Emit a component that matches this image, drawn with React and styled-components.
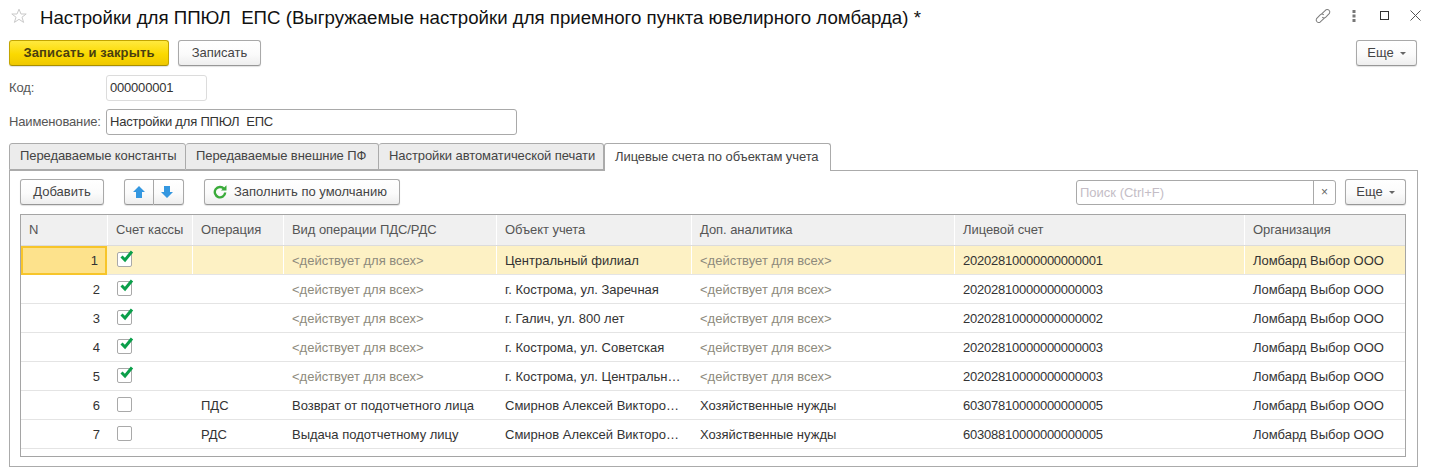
import React from "react";
import styled, { createGlobalStyle } from "styled-components";

const GlobalStyle = createGlobalStyle`
  html, body {
    margin: 0;
    padding: 0;
    background: #fff;
  }
  body {
    font-family: "Liberation Sans", Arial, sans-serif;
    font-size: 13px;
    color: #333;
  }
`;

const Page = styled.div`
  width: 1431px;
  height: 474px;
  overflow: hidden;
  padding: 0 14px 0 9px;
  box-sizing: border-box;
  display: flex;
  flex-direction: column;
`;

const TitleBar = styled.div`
  height: 39px;
  flex: none;
  display: flex;
  align-items: center;
  margin-bottom: 1px;
`;

const StarBox = styled.div`
  width: 31px;
  height: 18px;
  flex: none;
  padding-left: 2px;
  box-sizing: border-box;
  margin-top: -6px;
`;

const Title = styled.h1`
  flex: 1;
  margin: -3px 0 0;
  font-size: 18.67px;
  font-weight: 400;
  color: #111;
  white-space: pre;
`;

const WindowIcons = styled.div`
  display: flex;
  align-items: center;
  margin-top: -8px;
  margin-right: -14px;
  color: #555;
`;

const WindowIcon = styled.div`
  width: 31px;
  height: 18px;
  display: flex;
  align-items: center;
  justify-content: center;
`;

const CommandBar = styled.div`
  height: 26px;
  flex: none;
  display: flex;
  align-items: center;
  gap: 9px;
`;

const Spacer = styled.div`
  flex: 1;
`;

const Button = styled.button`
  height: 26px;
  width: ${(p) => p.$w}px;
  box-sizing: border-box;
  padding: 0 0 1px;
  margin: 0;
  border: 1px solid #a9a9a9;
  border-bottom-color: #979797;
  border-radius: 3px;
  background: linear-gradient(#ffffff, #fbfbfb 55%, #eeeeee);
  box-shadow: 0 1px 1px rgba(0, 0, 0, 0.12);
  font: 13px "Liberation Sans", Arial, sans-serif;
  color: #444;
  display: inline-flex;
  align-items: center;
  justify-content: center;
  gap: 6px;
  flex: none;
`;

const PrimaryButton = styled(Button)`
  border-color: #c3a500;
  border-bottom-color: #a88f00;
  background: linear-gradient(#ffe93f, #fbd900 55%, #efc800);
  font-weight: 700;
  letter-spacing: 0.12px;
  color: #4a3f10;
`;

const FillButton = styled(Button)`
  justify-content: flex-start;
  padding-left: 8px;
  gap: 7px;
`;

const Caret = styled.span`
  width: 0;
  height: 0;
  border-left: 3px solid transparent;
  border-right: 3px solid transparent;
  border-top: 3px solid #666;
  margin-top: 2px;
`;

const Field = styled.div`
  flex: none;
  display: flex;
  align-items: center;
  height: 26px;
  margin-top: ${(p) => p.$top}px;
`;

const Label = styled.label`
  width: 97px;
  flex: none;
  color: #555;
  letter-spacing: -0.15px;
  padding-bottom: 2px;
`;

const Input = styled.div`
  width: ${(p) => p.$w}px;
  height: 26px;
  box-sizing: border-box;
  border: 1px solid ${(p) => p.$border};
  border-radius: 3px;
  padding: 0 3px 2px;
  display: flex;
  align-items: center;
  color: #333;
  letter-spacing: -0.2px;
  white-space: pre;
`;

const Tabs = styled.div`
  flex: none;
  display: flex;
  height: 28px;
  margin-top: 8px;
`;

const Tab = styled.div`
  box-sizing: border-box;
  width: ${(p) => p.$w}px;
  height: ${(p) => (p.$active ? 28 : 27)}px;
  border: 1px solid #ababab;
  border-left-width: ${(p) => (p.$first || p.$active ? 1 : 0)}px;
  border-bottom-width: ${(p) => (p.$active ? 0 : 1)}px;
  border-radius: 3px 3px 0 0;
  background: ${(p) => (p.$active ? "#fff" : "#ececec")};
  color: #444;
  letter-spacing: -0.08px;
  display: flex;
  align-items: center;
  padding: 0 0 2px 10px;
  white-space: nowrap;
  position: relative;
  z-index: ${(p) => (p.$active ? 1 : 0)};
`;

const Panel = styled.div`
  flex: none;
  margin-top: -1px;
  width: 1409px;
  height: 297px;
  box-sizing: border-box;
  border: 1px solid #ababab;
  padding: 8px 11px 0 10px;
`;

const Toolbar = styled.div`
  height: 26px;
  display: flex;
  align-items: center;
`;

const ArrowGroup = styled.div`
  display: flex;
  margin-left: 20px;
  margin-right: 20px;
`;

const ArrowButton = styled(Button)`
  border-radius: ${(p) => (p.$left ? "3px 0 0 3px" : "0 3px 3px 0")};
  border-left-width: ${(p) => (p.$left ? 1 : 0)}px;
  padding-right: ${(p) => (p.$left ? 1 : 4)}px;
`;

const Search = styled.div`
  width: 260px;
  height: 25px;
  box-sizing: border-box;
  border: 1px solid #a9a9a9;
  border-radius: 3px;
  display: flex;
  align-items: center;
  margin-right: 9px;
`;

const SearchText = styled.div`
  flex: 1;
  padding-left: 3px;
  color: #c4bdc6;
`;

const SearchClear = styled.div`
  width: 21px;
  height: 100%;
  border-left: 1px solid #a9a9a9;
  display: flex;
  align-items: center;
  justify-content: center;
  color: #666;
  font-size: 12px;
`;

const Table = styled.div`
  margin-top: 9px;
  width: 1386px;
  height: 243px;
  box-sizing: border-box;
  border: 1px solid #a5a5a5;
`;

const columns = "87px 85px 91px 213px 195px 263px 290px 1fr";

const HeadRow = styled.div`
  display: grid;
  grid-template-columns: ${columns};
  height: 31px;
  background: #f0f0f0;
  border-bottom: 1px solid #dcdcdc;
  box-sizing: border-box;
`;

const HeadCell = styled.div`
  display: flex;
  align-items: center;
  padding: 0 0 1px 8px;
  color: #555;
  letter-spacing: -0.06px;
  border-right: 1px solid #fff;
  white-space: nowrap;
  &:last-child {
    border-right: 0;
  }
`;

const Row = styled.div`
  display: grid;
  grid-template-columns: ${columns};
  height: 29px;
  box-sizing: border-box;
  border-bottom: 1px solid #e4e4e4;
  background: ${(p) => (p.$selected ? "#fdf1c4" : "#fff")};
`;

const Cell = styled.div`
  display: flex;
  align-items: center;
  padding: 0 8px;
  min-width: 0;
  white-space: nowrap;
  color: ${(p) => (p.$muted ? "#8d8a7c" : "#333")};
  letter-spacing: ${(p) => (p.$digits ? "-0.24px" : "0")};
  border-right: 1px solid ${(p) => (p.$selected ? "#fff" : "transparent")};
  &:last-child {
    border-right: 0;
  }
`;

const NumberCell = styled.div`
  display: flex;
  align-items: center;
  justify-content: flex-end;
  padding-right: 7px;
  color: #333;
  box-sizing: border-box;
  margin-bottom: ${(p) => (p.$current ? "-1px" : "0")};
  background: ${(p) => (p.$current ? "#fde28c" : "transparent")};
  border: ${(p) => (p.$current ? "2px solid #f7c52a" : "0")};
  margin-right: 1px;
`;

const CheckCell = styled.div`
  display: flex;
  align-items: center;
  padding: 0 0 2px 9px;
  border-right: 1px solid ${(p) => (p.$selected ? "#fff" : "transparent")};
`;

const CheckBox = styled.div`
  width: 15px;
  height: 15px;
  box-sizing: border-box;
  border: 1px solid #a9a9a9;
  border-radius: 2px;
  background: #fff;
  position: relative;
`;

const CheckMark = styled.svg`
  position: absolute;
  left: 1px;
  top: -3px;
`;

const Star = () => (
  <svg width="16" height="16" viewBox="0 0 16 16">
    <path
      d="M8 1.200 10 6h5.200l-4.200 3.200 1.600 5.200L8 11.300 3.400 14.400 5 9.200.8 6H6z"
      fill="none"
      stroke="#c9c9c9"
      strokeWidth="1"
    />
  </svg>
);

const LinkIcon = () => (
  <svg width="18" height="18" viewBox="0 0 16 16" fill="none" stroke="#7d7d7d" strokeWidth="0.9">
    <path d="M6.800 6.200 10.600 2.500a2.300 2.300 0 0 1 3.100 3.200l-3.200 3.300a2.300 2.300 0 0 1-3.200 0" />
    <path d="M9.200 9.800 5.400 13.500a2.300 2.300 0 0 1-3.100-3.200l3.200-3.300a2.300 2.300 0 0 1 3.200 0" />
  </svg>
);

const DotsIcon = () => (
  <svg width="4" height="12" viewBox="0 0 4 12" fill="#777">
    <rect x="0.500" y="0" width="3" height="3" />
    <rect x="0.500" y="4.500" width="3" height="3" />
    <rect x="0.500" y="9" width="3" height="3" />
  </svg>
);

const MaximizeIcon = () => (
  <svg width="9" height="9" viewBox="0 0 9 9" fill="none" stroke="#333">
    <rect x="0.500" y="0.500" width="8" height="8" />
  </svg>
);

const CloseIcon = () => (
  <svg width="11" height="11" viewBox="0 0 11 11" fill="none" stroke="#555">
    <path d="M.5.500l10 10M10.500.500l-10 10" />
  </svg>
);

const ArrowIcon = ({ down }) => (
  <svg width="12" height="12" viewBox="0 0 12 12" fill="#3497e0">
    <path d={down ? "M3 0h6v6h3L6 12 0 6h3z" : "M6 0l6 6H9v6H3V6H0z"} />
  </svg>
);

const RefreshIcon = () => (
  <svg width="14" height="14" viewBox="0 0 14 14" fill="none">
    <path d="M11 3.800A5.200 5.200 0 1 0 12.200 7.500" stroke="#3aab3a" strokeWidth="2.400" />
    <path d="M8 5.600H13.500V.2z" fill="#3aab3a" />
  </svg>
);

const Check = () => (
  <CheckMark width="16" height="15" viewBox="0 0 16 15">
    <path d="M2.500 6.500 6 10 13 1.500" fill="none" stroke="#0b9f4a" strokeWidth="3" />
  </CheckMark>
);

const ALL = "<действует для всех>";
const ORG = "Ломбард Выбор ООО";
const PERSON = "Смирнов Алексей Викторо…";

const headers = [
  "N",
  "Счет кассы",
  "Операция",
  "Вид операции ПДС/РДС",
  "Объект учета",
  "Доп. аналитика",
  "Лицевой счет",
  "Организация",
];

const rows = [
  { n: 1, checked: true, op: "", kind: ALL, object: "Центральный филиал", extra: ALL, account: "20202810000000000001" },
  { n: 2, checked: true, op: "", kind: ALL, object: "г. Кострома, ул. Заречная", extra: ALL, account: "20202810000000000003" },
  { n: 3, checked: true, op: "", kind: ALL, object: "г. Галич, ул. 800 лет", extra: ALL, account: "20202810000000000002" },
  { n: 4, checked: true, op: "", kind: ALL, object: "г. Кострома, ул. Советская", extra: ALL, account: "20202810000000000003" },
  { n: 5, checked: true, op: "", kind: ALL, object: "г. Кострома, ул. Центральн…", extra: ALL, account: "20202810000000000003" },
  { n: 6, checked: false, op: "ПДС", kind: "Возврат от подотчетного лица", object: PERSON, extra: "Хозяйственные нужды", account: "60307810000000000005" },
  { n: 7, checked: false, op: "РДС", kind: "Выдача подотчетному лицу", object: PERSON, extra: "Хозяйственные нужды", account: "60308810000000000005" },
];

const App = () => (
  <Page>
    <GlobalStyle />
    <TitleBar>
      <StarBox>
        <Star />
      </StarBox>
      <Title>Настройки для ППЮЛ  ЕПС (Выгружаемые настройки для приемного пункта ювелирного ломбарда) *</Title>
      <WindowIcons>
        <WindowIcon><LinkIcon /></WindowIcon>
        <WindowIcon><DotsIcon /></WindowIcon>
        <WindowIcon><MaximizeIcon /></WindowIcon>
        <WindowIcon><CloseIcon /></WindowIcon>
      </WindowIcons>
    </TitleBar>
    <CommandBar>
      <PrimaryButton $w={160}>Записать и закрыть</PrimaryButton>
      <Button $w={83}>Записать</Button>
      <Spacer />
      <Button $w={61}>
        Еще <Caret />
      </Button>
    </CommandBar>
    <Field $top={9}>
      <Label>Код:</Label>
      <Input $w={101} $border="#dcdcdc">000000001</Input>
    </Field>
    <Field $top={8}>
      <Label>Наименование:</Label>
      <Input $w={411} $border="#a9a9a9">Настройки для ППЮЛ  ЕПС</Input>
    </Field>
    <Tabs>
      <Tab $first $w={177}>Передаваемые константы</Tab>
      <Tab $w={193}>Передаваемые внешние ПФ</Tab>
      <Tab $w={225}>Настройки автоматической печати</Tab>
      <Tab $active $w={227}>Лицевые счета по объектам учета</Tab>
    </Tabs>
    <Panel>
      <Toolbar>
        <Button $w={84}>Добавить</Button>
        <ArrowGroup>
          <ArrowButton $left $w={30}>
            <ArrowIcon />
          </ArrowButton>
          <ArrowButton $w={30}>
            <ArrowIcon down />
          </ArrowButton>
        </ArrowGroup>
        <FillButton $w={196}>
          <RefreshIcon />
          Заполнить по умолчанию
        </FillButton>
        <Spacer />
        <Search>
          <SearchText>Поиск (Ctrl+F)</SearchText>
          <SearchClear>×</SearchClear>
        </Search>
        <Button $w={61}>
          Еще <Caret />
        </Button>
      </Toolbar>
      <Table>
        <HeadRow>
          {headers.map((h) => (
            <HeadCell key={h}>{h}</HeadCell>
          ))}
        </HeadRow>
        {rows.map((r, i) => {
          const selected = i === 0;
          return (
            <Row key={r.n} $selected={selected}>
              <NumberCell $current={selected}>{r.n}</NumberCell>
              <CheckCell $selected={selected}>
                <CheckBox>{r.checked && <Check />}</CheckBox>
              </CheckCell>
              <Cell $selected={selected}>{r.op}</Cell>
              <Cell $selected={selected} $muted={r.kind === ALL}>{r.kind}</Cell>
              <Cell $selected={selected}>{r.object}</Cell>
              <Cell $selected={selected} $muted={r.extra === ALL}>{r.extra}</Cell>
              <Cell $selected={selected} $digits>{r.account}</Cell>
              <Cell $selected={selected}>{ORG}</Cell>
            </Row>
          );
        })}
      </Table>
    </Panel>
  </Page>
);

export default App;
